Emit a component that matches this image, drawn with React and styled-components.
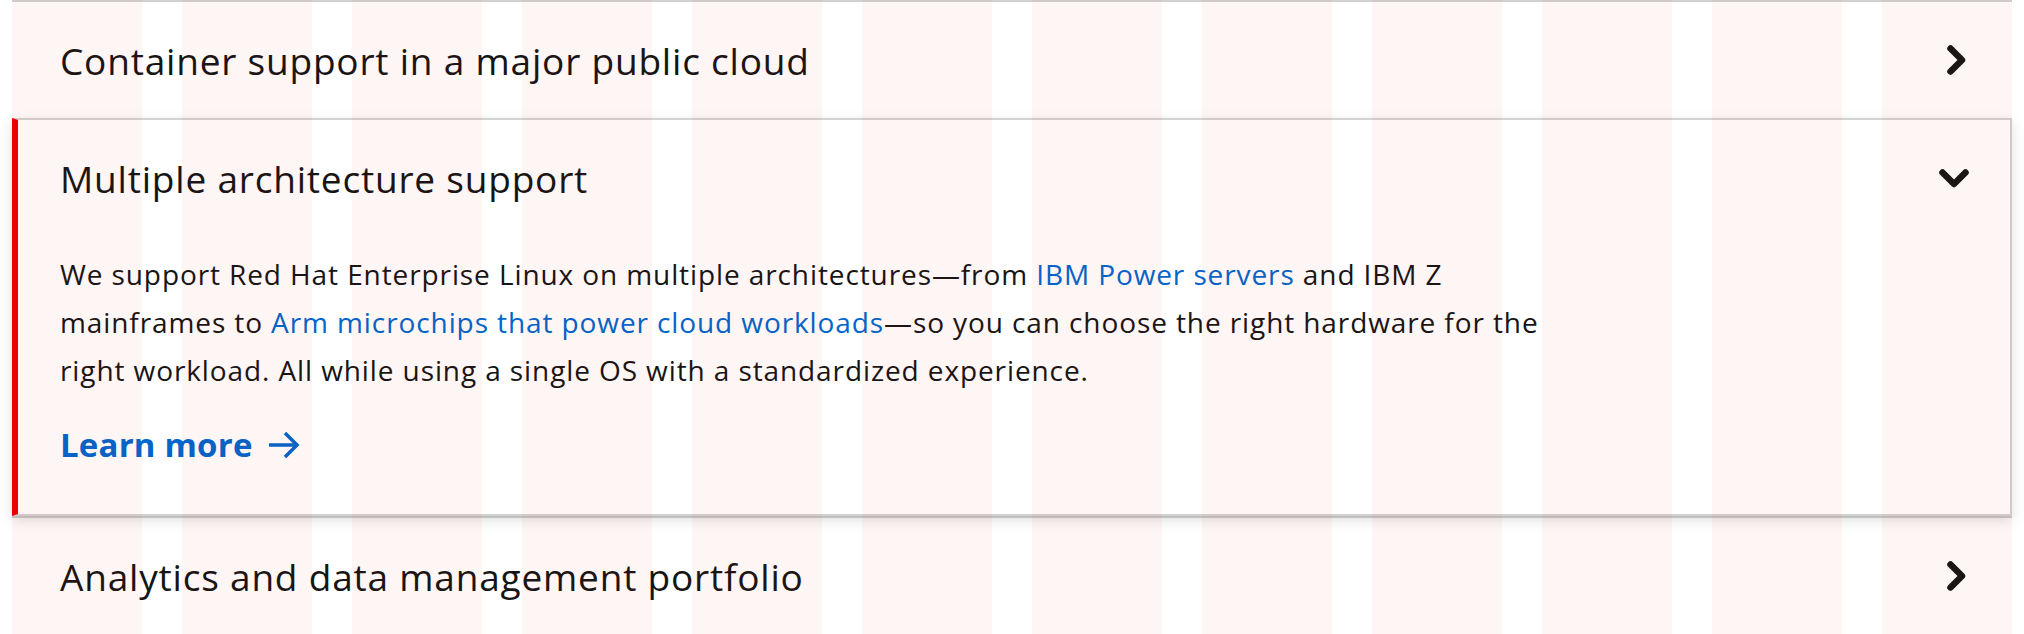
import styled, { createGlobalStyle } from "styled-components";

const GlobalStyle = createGlobalStyle`
    body{
        margin: 0;
        background: #fff;
        font-family: "Open Sans", Lato, sans-serif;
        color: #151515;
    }
`
const Page = styled.div`
    position: relative;
    height: 634px;
    overflow: hidden;
    padding: 0 12px;
`
const GridOverlay = styled.div`
    position: absolute;
    inset: 0;
    padding: 0 12px;
    display: grid;
    grid-template-columns: repeat(12, 1fr);
    column-gap: 40px;
    pointer-events: none;
    z-index: 5;
`
const GridCol = styled.div`
    background: rgba(238, 0, 0, 0.04);
`
const Item = styled.div`
    border-top: 2px solid #d2d2d2;
    &:last-child{
        border-bottom: 2px solid #d2d2d2;
    }
`
const ExpandedItem = styled(Item)`
    position: relative;
    z-index: 1;
    border-left: 6px solid #ee0000;
    border-right: 2px solid #d2d2d2;
    border-bottom: 2px solid #d2d2d2;
    box-shadow: 0 4px 12px rgba(0, 0, 0, 0.13);
    background: #fff;
`
const Header = styled.div`
    height: 116px;
    display: flex;
    align-items: center;
    justify-content: space-between;
    padding: 0 40px 0 ${p => p.$open ? 42 : 48}px;
`
const Title = styled.h3`
    margin: 0;
    font-size: 37px;
    font-weight: 500;
    letter-spacing: 0.8px;
`
const Chevron = styled.svg`
    width: 32px;
    height: 32px;
    flex: none;
`
const Body = styled.div`
    padding: 14px 48px 49px 42px;
`
const Text = styled.p`
    margin: 0;
    font-size: 28px;
    line-height: 48px;
    letter-spacing: 0.9px;
`
const Link = styled.a`
    color: #0066cc;
    text-decoration: none;
`
const LearnMore = styled.a`
    display: inline-flex;
    align-items: center;
    gap: 14px;
    margin-top: 31px;
    color: #0066cc;
    font-size: 33px;
    font-weight: 700;
    line-height: 40px;
    letter-spacing: 0.2px;
    text-decoration: none;
`

const ChevronIcon = ({ open }) => (
    <Chevron viewBox="0 0 32 32">
        <path
            d={open ? "M4.5 10.5 L16 22 L27.5 10.5" : "M10.5 4.5 L22 16 L10.5 27.5"}
            fill="none"
            stroke="#151515"
            strokeWidth="6.5"
            strokeLinecap="round"
            strokeLinejoin="round"
        />
    </Chevron>
)

const Arrow = () => (
    <svg width="34" height="30" viewBox="0 0 34 30">
        <path d="M2 15 H30 M18 3 L30 15 L18 27" fill="none" stroke="#0066cc" strokeWidth="3.5" strokeLinejoin="miter" />
    </svg>
)

const App = () => {
    return (
        <>
        <GlobalStyle/>
        <Page>
            <Item>
                <Header>
                    <Title>Container support in a major public cloud</Title>
                    <ChevronIcon />
                </Header>
            </Item>
            <ExpandedItem>
                <Header $open>
                    <Title>Multiple architecture support</Title>
                    <ChevronIcon open />
                </Header>
                <Body>
                    <Text>
                        We support Red Hat Enterprise Linux on multiple architectures—from <Link href="#">IBM Power servers</Link> and IBM Z<br/>
                        mainframes to <Link href="#">Arm microchips that power cloud workloads</Link>—so you can choose the right hardware for the<br/>
                        right workload. All while using a single OS with a standardized experience.
                    </Text>
                    <LearnMore href="#">Learn more <Arrow /></LearnMore>
                </Body>
            </ExpandedItem>
            <Item>
                <Header>
                    <Title>Analytics and data management portfolio</Title>
                    <ChevronIcon />
                </Header>
            </Item>
            <GridOverlay>
                {Array.from({ length: 12 }).map((_, i) => <GridCol key={i} />)}
            </GridOverlay>
        </Page>
        </>
    )
}

export default App
